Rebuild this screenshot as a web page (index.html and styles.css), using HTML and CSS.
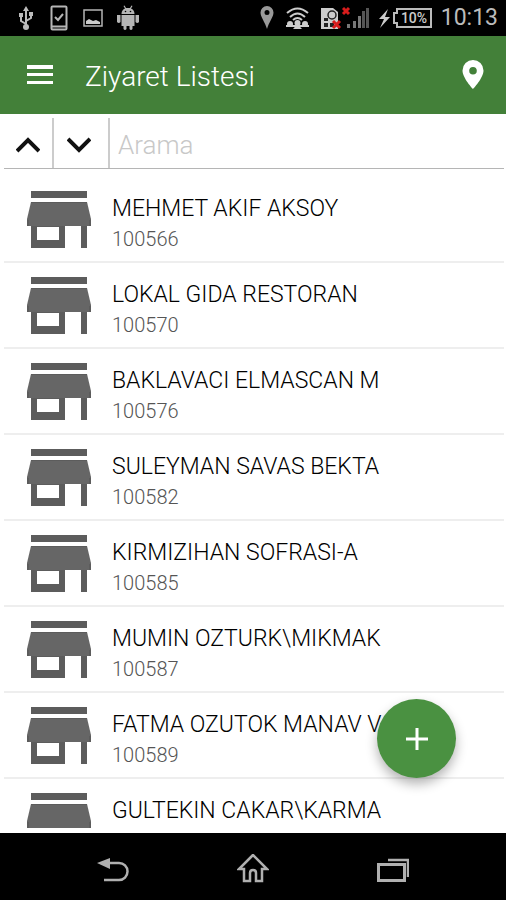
FILE: index.html
```html
<!DOCTYPE html>
<html lang="tr">
<head>
    <meta charset="utf-8">
    <meta name="viewport" content="width=device-width, initial-scale=1">
    <title>Ziyaret Listesi</title>
    <link rel="stylesheet" href="styles.css">
</head>
<body>
    <!-- store icon, shared by all rows -->
    <svg class="defs" width="0" height="0" aria-hidden="true">
        <symbol id="store" viewBox="0 0 64 57">
            <path fill="#5c5c5c" d="M4 0h56v7H4zM4 34h6v15h22V34h6v23H4zM54 34h6v23h-6z"/>
            <path fill="#5c5c5c" d="M4 34h34v2H4z"/>
            <path fill="#666" d="M4 11h56l4 17v7H0v-7z"/>
            <path fill="#5c5c5c" d="M4 11h56v1H4zM0 29h2v6H0zM62 29h2v6h-2z"/>
        </symbol>
    </svg>

    <div class="app">
        <div class="status-bar">
            <div class="status-left">
                <svg width="19" height="26" viewBox="0 0 19 26" fill="none" stroke="#bbb" stroke-width="2">
                    <path d="M9 4v18M9 19l-5-3v-5M9 16l5-3V9"/>
                    <path d="M9 1l3 5H6zM2 8h4v4H2zM12 7h4v4h-4z" fill="#bbb" stroke="none"/>
                    <circle cx="9" cy="22" r="3" fill="#bbb" stroke="none"/>
                </svg>
                <svg width="18" height="26" viewBox="0 0 18 26" fill="none" stroke="#b5b5b5" stroke-width="2">
                    <rect x="1.5" y="1.5" width="15" height="23" rx="1"/>
                    <path d="M5 12l3 3 5-6M2 21.500h14"/>
                </svg>
                <svg width="21" height="26" viewBox="0 0 21 26">
                    <rect x="2" y="5" width="18" height="16" fill="none" stroke="#b5b5b5" stroke-width="1.500"/>
                    <path d="M4 19v-3l3-2 4 2 3-1 4 2v2z" fill="#ccc"/>
                </svg>
                <svg width="22" height="26" viewBox="0 0 22 26" fill="#b5b5b5">
                    <path d="M4.500 9C4.500 6 6 4.500 8 3.500L6.500 1l1-.5L9 3h4l1.500-2.500 1 .5L14 3.500c2 1 3.500 2.500 3.500 5.500zM4.500 10h13v11h-2v3q-1.500 2-3 0v-3h-3v3q-1.500 2-3 0v-3h-2zM0 10h3.500v7q-1.700 2-3.500 0zM18.500 10H22v7q-1.700 2-3.500 0z"/>
                    <circle cx="8.500" cy="6.500" r="0.800" fill="#000"/>
                    <circle cx="13.500" cy="6.500" r="0.800" fill="#000"/>
                </svg>
            </div>
            <div class="status-right">
                <svg width="17" height="26" viewBox="0 0 17 26">
                    <path fill="#999" fill-rule="evenodd" d="M8 1a6.500 6.500 0 0 0-6.500 6.500C1.500 12 6 17 8 24c2-7 6.500-12 6.500-16.500A6.500 6.500 0 0 0 8 1zm0 4a2.500 2.500 0 1 1 0 5 2.500 2.500 0 0 1 0-5z"/>
                </svg>
                <svg width="25" height="26" viewBox="0 0 25 26" fill="none" stroke="#ccc" stroke-width="2">
                    <path d="M2 8q10.500-9 21 0M5 12q7.500-7 15 0M8 15q4.500-4 9 0"/>
                    <g fill="#ccc" stroke="none">
                        <circle cx="12.500" cy="18" r="3"/>
                        <circle cx="5" cy="19" r="3"/>
                        <circle cx="20" cy="19" r="3"/>
                        <path d="M8 24q4.500-7 9 0zM1 20h23v2H1z"/>
                    </g>
                </svg>
                <svg width="51" height="26" viewBox="0 0 51 26">
                    <path d="M2 3h12l5 4v17H2z" fill="#ccc"/>
                    <path d="M5 13h4v3H5zM5 18h4v4H5zM11 18h4v4h-4z" fill="#222"/>
                    <circle cx="13" cy="10" r="4" fill="none" stroke="#222" stroke-width="1.500"/>
                    <path d="M14 16l7 7M21 16l-7 7M24 3l6 6M30 3l-6 6" stroke="#d81c1c" stroke-width="3"/>
                    <path d="M28 19h3v4h-3zM34 16h3v7h-3zM39 11h3v12h-3z" fill="#777"/>
                    <path d="M43 6h3v17h-3zM47 3h3v20h-3z" fill="#555"/>
                </svg>
                <svg width="53" height="26" viewBox="0 0 53 26">
                    <path d="M9 4L0 14h5l-4 9L11 12H6z" fill="#ccc"/>
                    <path d="M18 4h34v18H18v-4h-3V8h3z" fill="none" stroke="#bbb" stroke-width="2"/>
                    <text x="35" y="18" class="battery-text">10%</text>
                </svg>
                <span class="clock">10:13</span>
            </div>
        </div>

        <header class="header">
            <button class="icon-button" aria-label="Menü">
                <svg width="26" height="20" viewBox="0 0 26 20" fill="#fff">
                    <path d="M0 0h26v4H0zM0 8h26v3H0zM0 16h26v3H0z"/>
                </svg>
            </button>
            <h1 class="title">Ziyaret Listesi</h1>
            <button class="icon-button" aria-label="Harita">
                <svg width="22" height="30" viewBox="0 0 22 30">
                    <path fill="#fff" fill-rule="evenodd" d="M11 0A10.500 10.500 0 0 0 .5 10.500C.5 18 11 29 11 29s10.500-11 10.500-18.500A10.500 10.500 0 0 0 11 0zm0 7a3.800 3.800 0 1 1 0 7.600A3.800 3.800 0 0 1 11 7z"/>
                </svg>
            </button>
        </header>

        <div class="search-bar">
            <button class="sort-button" aria-label="Yukarı">
                <svg width="24" height="16" viewBox="0 0 24 16" fill="none" stroke="#111" stroke-width="4"><path d="M1 14L12 3l11 11"/></svg>
            </button>
            <button class="sort-button" aria-label="Aşağı">
                <svg width="24" height="16" viewBox="0 0 24 16" fill="none" stroke="#111" stroke-width="4"><path d="M1 2l11 11L23 2"/></svg>
            </button>
            <input class="search-input" type="text" placeholder="Arama" aria-label="Arama">
        </div>

        <main class="content">
            <ul class="list">
                <li class="row">
                    <svg class="store-icon"><use href="#store"/></svg>
                    <div><div class="name">MEHMET AKIF AKSOY</div><div class="code">100566</div></div>
                </li>
                <li class="row">
                    <svg class="store-icon"><use href="#store"/></svg>
                    <div><div class="name">LOKAL GIDA RESTORAN</div><div class="code">100570</div></div>
                </li>
                <li class="row">
                    <svg class="store-icon"><use href="#store"/></svg>
                    <div><div class="name">BAKLAVACI ELMASCAN M</div><div class="code">100576</div></div>
                </li>
                <li class="row">
                    <svg class="store-icon"><use href="#store"/></svg>
                    <div><div class="name">SULEYMAN SAVAS BEKTA</div><div class="code">100582</div></div>
                </li>
                <li class="row">
                    <svg class="store-icon"><use href="#store"/></svg>
                    <div><div class="name">KIRMIZIHAN SOFRASI-A</div><div class="code">100585</div></div>
                </li>
                <li class="row">
                    <svg class="store-icon"><use href="#store"/></svg>
                    <div><div class="name">MUMIN OZTURK\MIKMAK</div><div class="code">100587</div></div>
                </li>
                <li class="row">
                    <svg class="store-icon"><use href="#store"/></svg>
                    <div><div class="name">FATMA OZUTOK MANAV V</div><div class="code">100589</div></div>
                </li>
                <li class="row">
                    <svg class="store-icon"><use href="#store"/></svg>
                    <div><div class="name">GULTEKIN CAKAR\KARMA</div></div>
                </li>
            </ul>
            <button class="fab" aria-label="Ekle">
                <svg width="22" height="22" viewBox="0 0 22 22" stroke="#fff" stroke-width="3"><path d="M11 0v22M0 11h22"/></svg>
            </button>
        </main>

        <nav class="nav-bar">
            <button class="nav-button" aria-label="Geri">
                <svg width="32" height="32" viewBox="0 0 32 32">
                    <path d="M10 9h12a8.500 8.500 0 0 1 0 17H7" fill="none" stroke="#b0b0b0" stroke-width="2.500"/>
                    <path d="M0 9l13-5v11z" fill="#b0b0b0"/>
                </svg>
            </button>
            <button class="nav-button" aria-label="Ana ekran">
                <svg width="32" height="32" viewBox="0 0 32 32" fill="none" stroke="#b0b0b0" stroke-width="2.500">
                    <path d="M16 1L2 15h5v12h6V19q0-3 3-3t3 3v8h6V15h5z"/>
                </svg>
            </button>
            <button class="nav-button" aria-label="Son uygulamalar">
                <svg width="32" height="32" viewBox="0 0 32 32" fill="none" stroke="#b0b0b0" stroke-width="3">
                    <path d="M1.500 10.500h26v16h-26z"/>
                    <path d="M11 6h20v17" stroke-width="2.500"/>
                </svg>
            </button>
        </nav>
    </div>
</body>
</html>
```

FILE: styles.css
```css
* {
    box-sizing: border-box;
}

body {
    margin: 0;
    font-family: Roboto, 'Noto Sans', sans-serif;
    background-color: #fff;
    color: #000;
}

button {
    margin: 0;
    padding: 0;
    border: none;
    background: none;
    display: flex;
    justify-content: center;
    align-items: center;
}

svg {
    display: block;
    flex-shrink: 0;
}

.defs {
    position: absolute;
}

.app {
    display: flex;
    flex-direction: column;
    height: 100vh;
}

/* status bar */
.status-bar {
    display: flex;
    justify-content: space-between;
    align-items: center;
    height: 36px;
    padding: 0 8px 0 17px;
    background: #000;
}

.status-left {
    display: flex;
    gap: 14px;
}

.status-right {
    display: flex;
    align-items: center;
    gap: 9px;
}

.battery-text {
    font-size: 14px;
    font-weight: 500;
    fill: #ccc;
    text-anchor: middle;
}

.clock {
    font-size: 23px;
    line-height: 36px;
    color: #bbb;
}

/* header */
.header {
    display: flex;
    align-items: center;
    height: 78px;
    padding: 0 12px;
    background: #438039;
}

.icon-button {
    width: 42px;
    height: 48px;
}

.icon-button:first-child {
    width: 56px;
}

.title {
    flex: 1;
    margin: 0;
    padding: 3px 0 0 17px;
    font-size: 28px;
    font-weight: 300;
    line-height: 36px;
    color: #fff;
}

/* search */
.search-bar {
    display: flex;
    height: 55px;
    margin: 0 2px 0 4px;
    padding-top: 4px;
    border-bottom: 1px solid #b5b5b5;
}

.sort-button {
    width: 50px;
    padding-top: 3px;
    border-right: 2px solid #ccc;
}

.sort-button + .sort-button {
    width: 56px;
    padding-right: 4px;
}

.search-input {
    flex: 1;
    min-width: 0;
    padding: 3px 8px 0;
    border: none;
    outline: none;
    background: none;
    font-family: inherit;
    font-size: 26px;
    font-weight: 300;
}

.search-input::placeholder {
    color: #c8c8c8;
}

/* list */
.content {
    position: relative;
    flex: 1;
    min-height: 0;
    padding-bottom: 5px;
}

.list {
    height: 100%;
    margin: 0;
    padding: 8px 2px 0 4px;
    overflow: hidden;
    list-style: none;
}

.row {
    display: flex;
    gap: 21px;
    height: 86px;
    padding: 14px 0 0 23px;
    border-bottom: 2px solid #eee;
}

.store-icon {
    width: 64px;
    height: 57px;
}

.name {
    padding-top: 4px;
    font-size: 23px;
    font-weight: 300;
    line-height: 28px;
    white-space: nowrap;
}

.code {
    padding-top: 4px;
    font-size: 20px;
    font-weight: 300;
    line-height: 24px;
    color: #555;
}

.fab {
    position: absolute;
    right: 50px;
    bottom: 55px;
    width: 79px;
    height: 79px;
    border-radius: 50%;
    background: #4a9141;
    box-shadow: 0 6px 12px rgba(0, 0, 0, 0.3);
}

/* system navigation */
.nav-bar {
    display: flex;
    justify-content: center;
    gap: 80px;
    height: 67px;
    padding-top: 6px;
    background: #000;
}

.nav-button {
    width: 60px;
}
```
